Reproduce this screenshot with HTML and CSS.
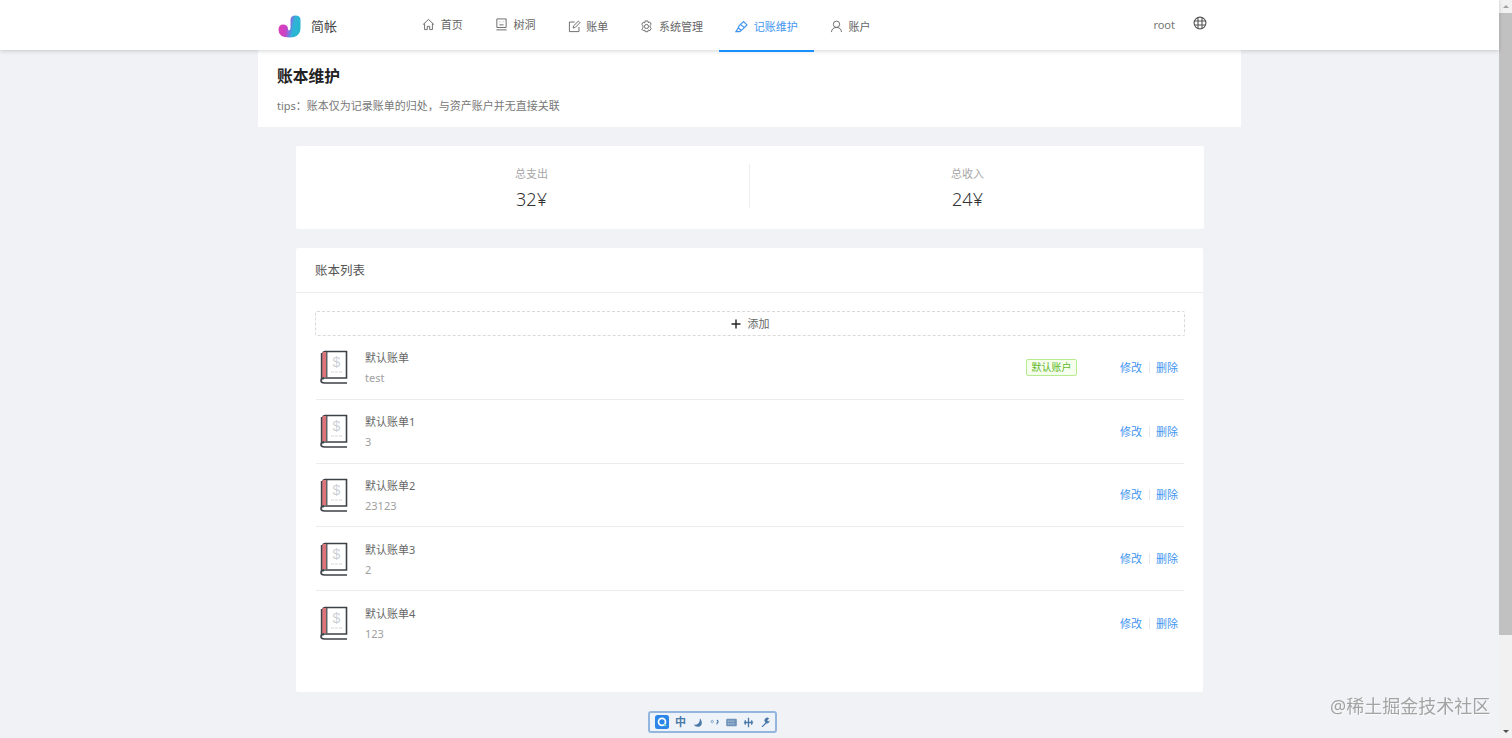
FILE: index.html
```html
<!DOCTYPE html>
<html lang="zh-CN">
<head>
<meta charset="utf-8">
<title>简帐</title>
<link rel="stylesheet" href="styles.css">
</head>
<body>
<svg class="defs" width="0" height="0" aria-hidden="true">
  <defs>
    <linearGradient id="jg" x1="0" y1="0.4" x2="1" y2="0.6">
      <stop offset="0" stop-color="#e03cb4"/>
      <stop offset="0.38" stop-color="#c843c8"/>
      <stop offset="0.55" stop-color="#6f7fe0"/>
      <stop offset="0.68" stop-color="#2fb4d8"/>
      <stop offset="1" stop-color="#25b6cc"/>
    </linearGradient>
    <symbol id="book" viewBox="0 0 28 34">
      <path d="M3 29.500V3.200Q3 1.500 5.200 1.500H26.500V28H4.600Q1 28 1 30.500T4.600 33H27" fill="none" stroke="#3d4248" stroke-width="1.600"/>
      <rect x="2.400" y="2.200" width="3.800" height="25" fill="#de7479"/>
      <path d="M1.400 3V29M6.800 1.500V27.500" stroke="#3d4248" stroke-width="1.200" fill="none"/>
      <path d="M11 22H22" stroke="#d4d6d9" stroke-width="1.200" stroke-dasharray="3 1"/>
      <text x="16.500" y="17" class="book-dollar">$</text>
    </symbol>
  </defs>
</svg>
<div class="app">
  <header class="topbar">
    <div class="brand">
      <svg class="logo" width="24" height="23" viewBox="0 0 24 23"><path d="M12.500 5Q12.500 .5 17.500 .5T22.500 5V12.500Q22.500 22.500 11.500 22.500Q.5 22.500 .5 15Q.5 9.500 5 9.500T10 13.500Q10 15.500 11 15.500T12.500 13Z" fill="url(#jg)"/></svg>
      <span class="brand-name">简帐</span>
    </div>
    <nav class="nav">
      <a class="nav-item nav-high">
        <svg class="ico" viewBox="0 0 14 14"><path d="M1 7.200 7 1.500l6 5.700M2.800 5.800V12.500h2.900V9h2.600v3.500h2.900V5.800"/></svg>首页
      </a>
      <a class="nav-item nav-high">
        <svg class="ico" viewBox="0 0 14 14"><path d="M2 1h10v9.200H2zM1.500 12.800h11"/><path d="M5 4.200h.6M8.400 4.200H9M4.800 7.400h4.400"/></svg>树洞
      </a>
      <a class="nav-item">
        <svg class="ico" viewBox="0 0 14 14"><path d="M11.800 7.500v5H1.500V2.200h5.600"/><path d="M5.500 8.600 6 6.300 11.200 1.200l1.700 1.700L7.700 8.100z"/></svg>账单
      </a>
      <a class="nav-item">
        <svg class="ico" viewBox="0 0 14 14"><circle cx="7" cy="7" r="2.200"/><path d="M5.600 1h2.800l.5 1.800 1.700-.6 1.500 2.400-1.300 1.300v1.800l1.300 1.300-1.500 2.400-1.700-.6-.5 1.800H5.600l-.5-1.800-1.700.6L1.900 9.800l1.300-1.300V6.100L1.900 4.800l1.500-2.400 1.700.6z"/></svg>系统管理
      </a>
      <a class="nav-item is-active">
        <svg class="ico ico-bold" viewBox="0 0 14 14"><path d="M1 12.600h4.200L6.500 11.300 3.600 8.400zM3.600 8.400 4.600 5.900 9.200 1.600 12.900 5.300 8.400 9.800 6.500 11.300M6 5 10.100 8.100"/></svg>记账维护
      </a>
      <a class="nav-item">
        <svg class="ico" viewBox="0 0 14 14"><circle cx="7" cy="4.600" r="3.400"/><path d="M1.600 13c0-3 2.400-5 5.400-5s5.400 2 5.400 5"/></svg>账户
      </a>
    </nav>
    <div class="account">
      <span class="account-name">root</span>
      <svg class="globe" viewBox="0 0 14 14"><circle cx="7" cy="7" r="5.900"/><path d="M1.500 5h11M1.500 9h11M5 1.500v11M9 1.500v11"/></svg>
    </div>
  </header>

  <main class="page">
    <section class="page-head">
      <h1 class="page-title">账本维护</h1>
      <p class="page-tips">tips：账本仅为记录账单的归处，与资产账户并无直接关联</p>
    </section>

    <div class="content">
      <section class="card stats">
        <div class="stat">
          <div class="stat-label">总支出</div>
          <div class="stat-value">32¥</div>
        </div>
        <div class="stat-sep"></div>
        <div class="stat">
          <div class="stat-label">总收入</div>
          <div class="stat-value">24¥</div>
        </div>
      </section>

      <section class="card list-card">
        <h2 class="list-title">账本列表</h2>
        <div class="list-body">
          <button class="add-btn" type="button">
            <svg class="plus" viewBox="0 0 10 10"><path d="M5 .5v9M.5 5h9"/></svg>添加
          </button>

          <article class="row">
            <svg class="book"><use href="#book"/></svg>
            <div class="row-meta"><div class="row-name">默认账单</div><div class="row-desc">test</div></div>
            <span class="tag">默认账户</span>
            <div class="actions"><a>修改</a><i class="act-sep"></i><a>删除</a></div>
          </article>
          <article class="row">
            <svg class="book"><use href="#book"/></svg>
            <div class="row-meta"><div class="row-name">默认账单1</div><div class="row-desc">3</div></div>
            <div class="actions"><a>修改</a><i class="act-sep"></i><a>删除</a></div>
          </article>
          <article class="row">
            <svg class="book"><use href="#book"/></svg>
            <div class="row-meta"><div class="row-name">默认账单2</div><div class="row-desc">23123</div></div>
            <div class="actions"><a>修改</a><i class="act-sep"></i><a>删除</a></div>
          </article>
          <article class="row">
            <svg class="book"><use href="#book"/></svg>
            <div class="row-meta"><div class="row-name">默认账单3</div><div class="row-desc">2</div></div>
            <div class="actions"><a>修改</a><i class="act-sep"></i><a>删除</a></div>
          </article>
          <article class="row">
            <svg class="book"><use href="#book"/></svg>
            <div class="row-meta"><div class="row-name">默认账单4</div><div class="row-desc">123</div></div>
            <div class="actions"><a>修改</a><i class="act-sep"></i><a>删除</a></div>
          </article>
        </div>
      </section>
    </div>
  </main>
</div>

<div class="scrollbar">
  <span class="arrow arrow-up"></span>
  <span class="thumb"></span>
  <span class="arrow arrow-down"></span>
</div>

<div class="ime">
  <svg class="ime-q" viewBox="0 0 14 14"><rect width="14" height="14" rx="2.500" fill="#2b86e8"/><circle cx="7" cy="6.800" r="3.500" fill="none" stroke="#fff" stroke-width="1.700"/><path d="M9 9l2 2" stroke="#7fe0c8" stroke-width="1.700"/></svg>
  <span class="ime-zh">中</span>
  <svg class="ime-i" viewBox="0 0 12 12"><path d="M8.500 1.500C9 6 6.500 8.500 2 8.500 3.500 11 8 11.500 10 9 11.500 6.500 10.500 3 8.500 1.500z" fill="#4a79a8"/></svg>
  <svg class="ime-i" viewBox="0 0 12 12"><circle cx="3.500" cy="5" r="1.300" fill="none" stroke="#7ba0c4"/><path d="M8.500 3.800a1.200 1.200 0 0 1 .6 2.300L8.500 8" fill="none" stroke="#4a79a8" stroke-width="1.300"/></svg>
  <svg class="ime-i" viewBox="0 0 12 12"><rect x=".2" y="2" width="11.600" height="8" rx="1" fill="#6f93b8"/><path d="M2 4.500h8M2 7.500h8" stroke="#dfe9f3" stroke-dasharray="1 1"/></svg>
  <svg class="ime-i" viewBox="0 0 12 12"><path d="M6 .8v10.400M2.500 3.500v5M9.500 3.500v5M1 6h10" stroke="#4a79a8" stroke-width="1.400" fill="none"/></svg>
  <svg class="ime-i" viewBox="0 0 12 12"><path d="M1.500 10.500 6 6A3 3 0 0 1 10 1.500L8 3.500 8.800 4.800 10.500 3.800A3 3 0 0 1 7 7L3 11z" fill="#4a79a8"/></svg>
</div>
<div class="watermark">@稀土掘金技术社区</div>
</body>
</html>
```
FILE: styles.css
```css
* { box-sizing: border-box; }

html, body {
  margin: 0;
  height: 738px;
  overflow: hidden;
}

body {
  display: flex;
  background: #f0f2f5;
  color: #555;
  font-family: "Noto Sans", "Noto Sans CJK SC", sans-serif;
  font-size: 11px;
  line-height: 17px;
}

.defs { position: absolute; }

.app {
  flex: 1;
  min-width: 0;
}

/* top bar */
.topbar {
  position: relative;
  z-index: 2;
  height: 50px;
  display: flex;
  align-items: stretch;
  padding-left: 278px;
  padding-right: 292px;
  background: #fff;
  box-shadow: 0 1px 4px rgba(0, 21, 41, .18);
}

.brand {
  width: 128px;
  display: flex;
  align-items: center;
  gap: 9px;
  padding-top: 2px;
}

.logo { flex: none; }

.brand-name {
  font-size: 13px;
  color: #444;
}

.nav {
  display: flex;
  flex: 1;
  height: 52px;
}

.nav-item {
  display: flex;
  align-items: center;
  gap: 5.750px;
  padding: 2px 16px 0;
  color: #666;
  border-bottom: 2px solid transparent;
}

.nav-high { padding-top: 0; padding-bottom: 2px; }

.nav-item.is-active {
  color: #3f96f0;
  border-bottom-color: #1890ff;
}

.ico {
  width: 13px;
  height: 13px;
  flex: none;
  fill: none;
  stroke: currentColor;
  stroke-width: 1;
}

.ico-bold { stroke-width: 1.300; }

.account {
  display: flex;
  align-items: center;
  gap: 18px;
  padding-bottom: 1px;
}

.account-name { color: #777; }

.globe {
  width: 14px;
  height: 14px;
  margin-bottom: 3px;
  fill: none;
  stroke: #555;
  stroke-width: 1.100;
}

/* page */
.page-head {
  width: 983px;
  height: 77px;
  margin: 0 auto;
  padding: 16px 19px 0;
  background: #fff;
}

.page-title {
  margin: 0;
  font-size: 15.750px;
  font-weight: 700;
  line-height: 20px;
  color: #222;
}

.page-tips {
  margin: 11px 0 0;
  color: #777;
}

.content {
  width: 983px;
  margin: 0 auto;
  padding: 19px 38px 0;
}

.card {
  background: #fff;
  border-radius: 2px;
}

.stats {
  display: flex;
  align-items: center;
  width: 908px;
  height: 83px;
  padding: 0 19px 0 18px;
  margin-bottom: 19px;
}

.stat {
  flex: 1;
  padding-top: 1px;
  text-align: center;
}

.stat-label { color: #a6a6a6; }

.stat-value {
  margin-top: 4px;
  font-size: 18px;
  font-weight: 300;
  line-height: 26px;
  color: #333;
}

.stat-sep {
  width: 1px;
  height: 44px;
  margin-top: -3px;
  background: #eee;
}

.list-card {
  height: 444px;
}

.list-title {
  margin: 0;
  height: 45px;
  padding: 0 19px;
  display: flex;
  align-items: center;
  font-size: 12.500px;
  font-weight: 400;
  color: #555;
  border-bottom: 1px solid #ececec;
}

.list-body { padding: 18px 19px 0; }

.add-btn {
  width: 870px;
  height: 25px;
  display: flex;
  align-items: center;
  justify-content: center;
  gap: 7px;
  padding: 0;
  font: inherit;
  color: #666;
  background: #fff;
  border: 1px dashed #d9d9d9;
  border-radius: 2px;
}

.plus {
  width: 10px;
  height: 10px;
  fill: none;
  stroke: #222;
  stroke-width: 1.400;
}

.row {
  height: 63.800px;
  display: flex;
  align-items: center;
  width: 868px;
  margin-left: 1px;
  padding: 0 6px 0 4px;
  border-bottom: 1px solid #ececec;
}

.row:last-child { border-bottom: 0; }

.book {
  width: 28px;
  height: 34px;
  flex: none;
}

.book-dollar {
  font-family: "Liberation Sans", sans-serif;
  font-size: 14px;
  fill: #ccd0d4;
  text-anchor: middle;
}

.row-meta {
  flex: 1;
  margin-left: 17px;
  padding-top: 1px;
}

.row-name { color: #666; }

.row-desc {
  margin-top: 3px;
  color: #a0a0a0;
}

.tag {
  height: 17px;
  width: 51px;
  margin-right: 43px;
  font-size: 10px;
  line-height: 15px;
  text-align: center;
  color: #62b62a;
  background: #f6ffed;
  border: 1px solid #b7eb8f;
  border-radius: 2px;
}

.actions {
  display: flex;
  align-items: center;
  gap: 6.500px;
  color: #3f96f0;
}

.act-sep {
  width: 1px;
  height: 11px;
  background: #e8e8e8;
}

/* scrollbar drawn as part of the picture */
.scrollbar {
  width: 13px;
  flex: none;
  display: flex;
  flex-direction: column;
  align-items: center;
  background: #f1f1f1;
}

.arrow {
  flex: none;
  width: 0;
  height: 0;
  margin: 5px 0;
  border-left: 3.500px solid transparent;
  border-right: 3.500px solid transparent;
}

.arrow-up { border-bottom: 3.500px solid #a0a0a0; }

.arrow-down {
  border-top: 3.500px solid #505050;
  margin-top: auto;
}

.thumb {
  width: 100%;
  height: 622px;
  background: #c1c1c1;
}

/* floating overlays */
.ime {
  position: fixed;
  left: 648px;
  top: 711px;
  width: 129px;
  height: 22px;
  display: flex;
  align-items: center;
  gap: 6px;
  padding: 0 5px;
  background: #eef3f9;
  border: 2px solid #94b6de;
  border-radius: 3px;
}

.ime-q {
  width: 14px;
  height: 14px;
  flex: none;
}

.ime-zh {
  width: 12px;
  font-size: 11px;
  font-weight: 700;
  line-height: 12px;
  color: #4a79a8;
}

.ime-i {
  width: 11px;
  height: 11px;
  flex: none;
}

.watermark {
  position: fixed;
  left: 1330px;
  top: 693px;
  font-size: 18px;
  line-height: 26px;
  color: #a3a3a3;
  text-shadow: 1px 1px 0 rgba(255, 255, 255, .6);
}
```
